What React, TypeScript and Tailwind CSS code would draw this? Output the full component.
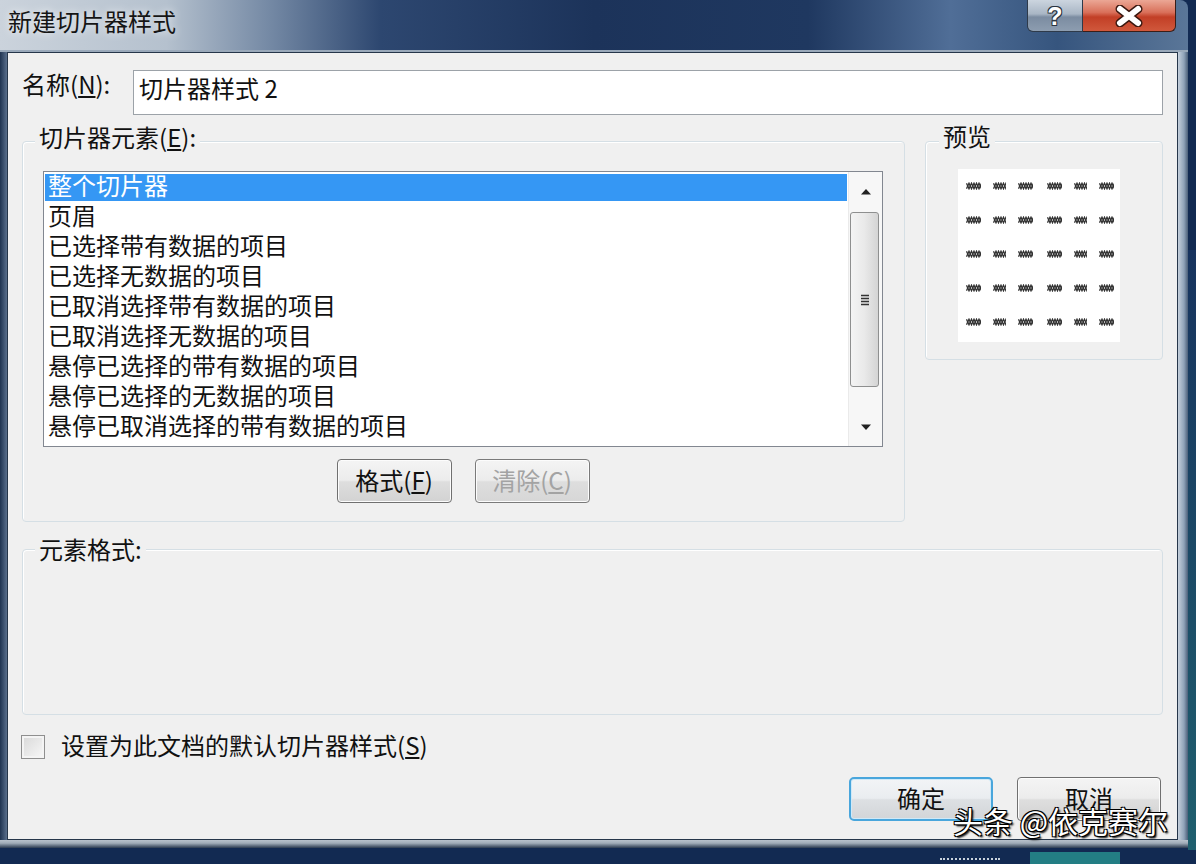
import React from "react";

const items = [
  "整个切片器",
  "页眉",
  "已选择带有数据的项目",
  "已选择无数据的项目",
  "已取消选择带有数据的项目",
  "已取消选择无数据的项目",
  "悬停已选择的带有数据的项目",
  "悬停已选择的无数据的项目",
  "悬停已取消选择的带有数据的项目",
];

function Glyph({ w }: { w: number }) {
  return (
    <svg width={w} height="8" viewBox={`0 0 ${w} 8`}>
      <path
        d="M0.5 1.2 L3 6.8 L5.5 1.2 L8 6.8 L10.5 1.2 L13 6.8 L15.5 1.2"
        fill="none"
        stroke="#333"
        strokeWidth="1.3"
      />
      <path
        d="M0.5 6.8 L3 1.2 L5.5 6.8 L8 1.2 L10.5 6.8 L13 1.2 L15.5 6.8"
        fill="none"
        stroke="#333"
        strokeWidth="1.3"
      />
    </svg>
  );
}

function PreviewRow() {
  const widths = [15, 13, 15, 15, 13, 15];
  return (
    <div className="flex h-[34px] items-center pl-[2px]">
      {widths.map((w, i) => (
        <div
          key={i}
          className={`flex w-[26px] justify-center ${i === 3 ? "ml-[3px]" : ""}`}
        >
          <Glyph w={w} />
        </div>
      ))}
    </div>
  );
}

export default function App() {
  return (
    <div className="relative h-[864px] w-[1196px] overflow-hidden bg-[#122a52] font-['Noto_Sans_CJK_SC','Noto_Sans',sans-serif] text-[#111]">
      {/* desktop bits */}
      <div className="absolute bottom-0 left-[1030px] h-[12px] w-[90px] bg-[#237e84]" />
      <div className="absolute bottom-[2px] left-[940px] h-[4px] w-[60px] border-t-2 border-dotted border-[#c8d2dc]" />
      <div className="absolute right-0 top-[250px] h-[600px] w-[8px] bg-[linear-gradient(to_bottom,#17335e,#1f5f6e)]" />

      {/* window */}
      <div className="relative flex h-[848px] w-[1188px] flex-col overflow-hidden rounded-tr-[8px]">
        {/* title bar */}
        <div className="flex h-[52px] shrink-0 border-b-2 border-[#9aa9ba] bg-[linear-gradient(to_right,#cbd3dc_0%,#b5c1ce_14%,#7287a3_23%,#2d4770_32%,#1c335a_50%,#1f3860_68%,#506e97_80%,#36557e_89%,#5a7698_100%)]">
          <div className="pl-[8px] pt-[5px] text-[24px] leading-[32px] text-[#151515] [text-shadow:0_0_8px_rgba(255,255,255,0.9)]">
            新建切片器样式
          </div>
          <div className="ml-auto mr-[12px] flex h-[32px]">
            <div className="flex h-[32px] w-[56px] items-center justify-center rounded-bl-[6px] border border-t-0 border-[#2e3a4a] bg-[linear-gradient(to_bottom,#ccd5df_0%,#a9b6c5_45%,#7b8ca1_55%,#8d9db0_100%)]">
              <span className="font-['Liberation_Sans',sans-serif] text-[25px] font-bold leading-[30px] text-white [text-shadow:1px_1px_0_#2a3440,-1px_-1px_0_#2a3440,1px_-1px_0_#2a3440,-1px_1px_0_#2a3440]">
                ?
              </span>
            </div>
            <div className="flex h-[32px] w-[93px] items-center justify-center rounded-br-[6px] border border-l-0 border-t-0 border-[#3a1e18] bg-[linear-gradient(to_bottom,#eba795_0%,#d9705a_40%,#c23f26_55%,#d0583c_100%)]">
              <svg width="32" height="22" viewBox="0 0 32 22">
                <path d="M7 4 L25 18 M25 4 L7 18" stroke="#3b1810" strokeWidth="9" strokeLinecap="round" />
                <path d="M7 4 L25 18 M25 4 L7 18" stroke="#ffffff" strokeWidth="6" strokeLinecap="round" />
              </svg>
            </div>
          </div>
        </div>

        {/* body */}
        <div className="flex min-h-0 flex-1">
          <div className="w-[7px] bg-[linear-gradient(to_right,#1f3350,#5a6f8c)]" />
          <div className="flex w-[1171px] flex-col border border-[#26364a] bg-[#f0f0f0] px-[14px]">
            {/* name row */}
            <div className="mt-[17px] flex h-[45px] items-start">
              <div className="-mt-[3px] w-[111px] text-[24px] leading-[34px]">
                名称(<u className="underline-offset-2">N</u>):
              </div>
              <div className="h-[45px] flex-1 border border-[#9ca2a8] bg-white pl-[5px] text-[24px] leading-[34px]">
                切片器样式 2
              </div>
            </div>

            {/* upper groups */}
            <div className="mt-[26px] flex gap-[20px]">
              <div className="relative h-[381px] w-[883px] rounded-[4px] border border-[#d5dfe5] shadow-[inset_1px_1px_0_#ffffff]">
                <div className="absolute left-[12px] top-[-20px] bg-[#f0f0f0] px-[4px] text-[24px] leading-[30px]">
                  切片器元素(<u className="underline-offset-2">E</u>):
                </div>
                <div className="pl-[20px] pt-[29px]">
                  <div className="flex h-[276px] w-[840px] border border-[#828790] bg-white">
                    <div className="flex-1 px-[1px]">
                      {items.map((t, i) => (
                        <div key={i} className="flex h-[30px] items-center">
                          <div
                            className={`h-[27px] w-full pl-[3px] text-[24px] leading-[22px] ${
                              i === 0 ? "bg-[#3597f4] text-white" : "text-[#111]"
                            }`}
                          >
                            {t}
                          </div>
                        </div>
                      ))}
                    </div>
                    <div className="flex w-[34px] flex-col border-l border-[#eaeaea] bg-[#f7f7f7]">
                      <div className="flex h-[38px] items-center justify-center">
                        <svg width="12" height="7" viewBox="0 0 12 7">
                          <path d="M1 6.5 L6 1 L11 6.5 Z" fill="#222" />
                        </svg>
                      </div>
                      <div className="ml-[1px] mt-[2px] flex h-[175px] w-[29px] items-center justify-center rounded-[3px] border border-[#8e8f8f] bg-[linear-gradient(to_right,#f4f4f4_0%,#e9e9e9_50%,#d4d4d4_100%)]">
                        <svg width="10" height="12" viewBox="0 0 10 12">
                          <path d="M1 1.5 H9 M1 4.5 H9 M1 7.5 H9 M1 10.5 H9" stroke="#333" strokeWidth="1.4" />
                        </svg>
                      </div>
                      <div className="flex-1" />
                      <div className="flex h-[38px] items-center justify-center">
                        <svg width="12" height="7" viewBox="0 0 12 7">
                          <path d="M1 0.5 L6 6 L11 0.5 Z" fill="#222" />
                        </svg>
                      </div>
                    </div>
                  </div>
                  <div className="mt-[12px] flex w-[840px] justify-center gap-[23px]">
                    <div className="flex h-[44px] w-[115px] items-center justify-center rounded-[4px] border border-[#707070] bg-[linear-gradient(to_bottom,#f4f4f4_0%,#ececec_48%,#dedede_52%,#d2d2d2_100%)] pb-[3px] text-[24px] leading-none shadow-[inset_0_0_0_1px_#fcfcfc]">
                      格式(<u className="underline-offset-2">F</u>)
                    </div>
                    <div className="flex h-[44px] w-[115px] items-center justify-center rounded-[4px] border border-[#7a7a7a] bg-[linear-gradient(to_bottom,#f4f4f4_0%,#ececec_48%,#dedede_52%,#d6d6d6_100%)] pb-[3px] text-[24px] leading-none text-[#a3a3a3] shadow-[inset_0_0_0_1px_#fcfcfc]">
                      清除(<u className="underline-offset-2">C</u>)
                    </div>
                  </div>
                </div>
              </div>

              <div className="relative h-[219px] w-[238px] rounded-[4px] border border-[#d5dfe5] shadow-[inset_1px_1px_0_#ffffff]">
                <div className="absolute left-[13px] top-[-21px] bg-[#f0f0f0] px-[4px] text-[24px] leading-[30px]">
                  预览
                </div>
                <div className="pl-[32px] pt-[27px]">
                  <div className="h-[173px] w-[162px] bg-white">
                    <PreviewRow />
                    <PreviewRow />
                    <PreviewRow />
                    <PreviewRow />
                    <PreviewRow />
                  </div>
                </div>
              </div>
            </div>

            {/* element format group */}
            <div className="relative mt-[27px] h-[166px] w-[1141px] rounded-[4px] border border-[#d5dfe5] shadow-[inset_1px_1px_0_#ffffff]">
              <div className="absolute left-[12px] top-[-16px] bg-[#f0f0f0] px-[4px] text-[24px] leading-[30px]">
                元素格式:
              </div>
            </div>

            {/* checkbox */}
            <div className="mt-[20px] flex h-[24px] items-center">
              <div className="-ml-[1px] h-[24px] w-[24px] border border-[#8f8f8f] bg-[linear-gradient(135deg,#d8d8d8,#f8f8f8)] shadow-[inset_0_0_0_2px_#f4f4f4]" />
              <div className="-mt-[4px] ml-[16px] text-[24px] leading-[30px]">
                设置为此文档的默认切片器样式(<u className="underline-offset-2">S</u>)
              </div>
            </div>

            {/* ok / cancel */}
            <div className="mt-[18px] flex justify-end gap-[24px] pr-[2px]">
              <div className="flex h-[44px] w-[144px] items-center justify-center rounded-[5px] border-2 border-[#49a6dc] bg-[linear-gradient(to_bottom,#f2f4f6_0%,#eaedf0_48%,#dde0e3_52%,#d2d5d8_100%)] pb-[3px] text-[24px] leading-none shadow-[inset_0_0_0_1px_#cfe9f8]">
                确定
              </div>
              <div className="flex h-[44px] w-[144px] items-center justify-center rounded-[4px] border border-[#707070] bg-[linear-gradient(to_bottom,#f4f4f4_0%,#ececec_48%,#dedede_52%,#d2d2d2_100%)] pb-[3px] text-[24px] leading-none shadow-[inset_0_0_0_1px_#fcfcfc]">
                取消
              </div>
            </div>
          </div>
          <div className="flex-1 bg-[linear-gradient(to_right,#c5d0dc,#8fa2b8_60%,#4a5e78)]" />
        </div>
        <div className="h-[8px] shrink-0 bg-[linear-gradient(to_bottom,#b8c2cc_0%,#a0acb8_40%,#2a3a50_100%)]" />
      </div>

      {/* watermark */}
      <div className="absolute left-[953px] top-[800px] text-[30px] leading-[40px] text-white [text-shadow:1px_1px_0_#000,-1px_-1px_0_#000,1px_-1px_0_#000,-1px_1px_0_#000,2px_2px_2px_#000]">
        头条 @依克赛尔
      </div>
    </div>
  );
}
